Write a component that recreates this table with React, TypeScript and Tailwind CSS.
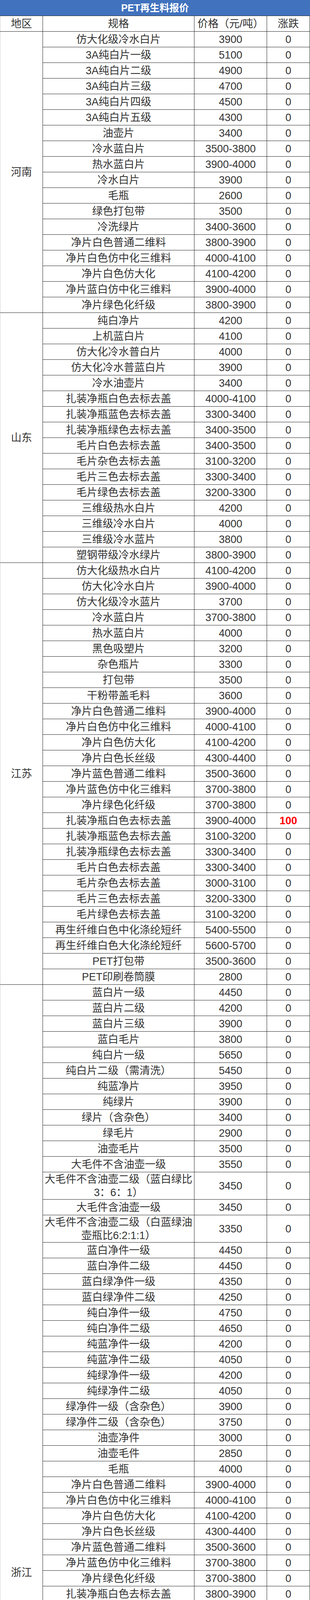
import React from "react";

type Group = { region: string; rows: string[] };

// each row: "spec|price|change" ; "\n" inside spec marks a line break (tall row)
const groups: Group[] = [
  {
    region: "河南",
    rows: [
      "仿大化级冷水白片|3900",
      "3A纯白片一级|5100",
      "3A纯白片二级|4900",
      "3A纯白片三级|4700",
      "3A纯白片四级|4500",
      "3A纯白片五级|4300",
      "油壶片|3400",
      "冷水蓝白片|3500-3800",
      "热水蓝白片|3900-4000",
      "冷水白片|3900",
      "毛瓶|2600",
      "绿色打包带|3500",
      "冷洗绿片|3400-3600",
      "净片白色普通二维料|3800-3900",
      "净片白色仿中化三维料|4000-4100",
      "净片白色仿大化|4100-4200",
      "净片蓝白仿中化三维料|3900-4000",
      "净片绿色化纤级|3800-3900",
    ],
  },
  {
    region: "山东",
    rows: [
      "纯白净片|4200",
      "上机蓝白片|4100",
      "仿大化冷水普白片|4000",
      "仿大化冷水普蓝白片|3900",
      "冷水油壶片|3400",
      "扎装净瓶白色去标去盖|4000-4100",
      "扎装净瓶蓝色去标去盖|3300-3400",
      "扎装净瓶绿色去标去盖|3400-3500",
      "毛片白色去标去盖|3400-3500",
      "毛片杂色去标去盖|3100-3200",
      "毛片三色去标去盖|3300-3400",
      "毛片绿色去标去盖|3200-3300",
      "三维级热水白片|4200",
      "三维级冷水白片|4000",
      "三维级冷水蓝片|3800",
      "塑钢带级冷水绿片|3800-3900",
    ],
  },
  {
    region: "江苏",
    rows: [
      "仿大化级热水白片|4100-4200",
      "仿大化冷水白片|3900-4000",
      "仿大化级冷水蓝片|3700",
      "冷水蓝白片|3700-3800",
      "热水蓝白片|4000",
      "黑色吸塑片|3200",
      "杂色瓶片|3300",
      "打包带|3500",
      "干粉带盖毛料|3600",
      "净片白色普通二维料|3900-4000",
      "净片白色仿中化三维料|4000-4100",
      "净片白色仿大化|4100-4200",
      "净片白色长丝级|4300-4400",
      "净片蓝色普通二维料|3500-3600",
      "净片蓝色仿中化三维料|3700-3800",
      "净片绿色化纤级|3700-3800",
      "扎装净瓶白色去标去盖|3900-4000|100",
      "扎装净瓶蓝色去标去盖|3100-3200",
      "扎装净瓶绿色去标去盖|3300-3400",
      "毛片白色去标去盖|3300-3400",
      "毛片杂色去标去盖|3000-3100",
      "毛片三色去标去盖|3200-3300",
      "毛片绿色去标去盖|3100-3200",
      "再生纤维白色中化涤纶短纤|5400-5500",
      "再生纤维白色大化涤纶短纤|5600-5700",
      "PET打包带|3500-3600",
      "PET印刷卷筒膜|2800",
    ],
  },
  {
    region: "浙江",
    rows: [
      "蓝白片一级|4450",
      "蓝白片二级|4200",
      "蓝白片三级|3900",
      "蓝白毛片|3800",
      "纯白片一级|5650",
      "纯白片二级（需清洗）|5450",
      "纯蓝净片|3950",
      "纯绿片|3900",
      "绿片（含杂色）|3400",
      "绿毛片|2900",
      "油壶毛片|3500",
      "大毛件不含油壶一级|3550",
      "大毛件不含油壶二级（蓝白绿比\n3：6：1）|3450",
      "大毛件含油壶一级|3450",
      "大毛件不含油壶二级（白蓝绿油\n壶瓶比6:2:1:1）|3350",
      "蓝白净件一级|4450",
      "蓝白净件二级|4450",
      "蓝白绿净件一级|4350",
      "蓝白绿净件二级|4250",
      "纯白净件一级|4750",
      "纯白净件二级|4650",
      "纯蓝净件一级|4200",
      "纯蓝净件二级|4050",
      "纯绿净件一级|4200",
      "纯绿净件二级|4050",
      "绿净件一级（含杂色）|3900",
      "绿净件二级（含杂色）|3750",
      "油壶净件|3000",
      "油壶毛件|2850",
      "毛瓶|4000",
      "净片白色普通二维料|3900-4000",
      "净片白色仿中化三维料|4000-4100",
      "净片白色仿大化|4100-4200",
      "净片白色长丝级|4300-4400",
      "净片蓝色普通二维料|3500-3600",
      "净片蓝色仿中化三维料|3700-3800",
      "净片绿色化纤级|3700-3800",
      "扎装净瓶白色去标去盖|3800-3900",
      "扎装净瓶蓝色去标去盖|3300-3400",
      "扎装净瓶绿色去标去盖|3300-3400",
      "毛片白色去标去盖|3300-3400",
      "毛片杂色去标去盖|3000-3100",
      "毛片三色去标去盖|3200-3300",
      "毛片绿色去标去盖|3100-3200",
      "绿净砖|3700",
      "热水蓝白片|4100-4200",
      "冷水蓝白片|3800",
      "蓝白毛片（带盖）|3400",
      "油瓶毛片|3400",
      "冷水绿片|3900",
      "普通白瓶（外表灰暗但水洗后能\n恢复光亮）|3600",
      "等外白瓶（含黏胶标签，外表灰\n暗但水洗后不能恢复光亮）|2800",
      "蓝瓶|2400",
      "散货优质绿瓶（单独打包，优质\n比例85%以上，加400元/吨）|2300",
      "普通绿瓶|2100",
      "小油瓶（油瓶比例不超过\n10%）|2500",
      "散货杂色瓶（单独打包，加300\n元/吨）|100",
      "散货杂塑瓶（单独打包，加300\n元/吨）|100",
      "散货瓶盖（单独装袋，加200元/\n吨）|2600",
      "冷水片3A白瓶片（分六级，按\n等级结算）|4400-4900",
      "冷水白蓝片（分六级，按等级结\n算）|4100-4500",
      "单独打包油砖|2500",
      "单独打包瓶胚粉碎料（白）|6600",
      "单独打包瓶胚粉碎料（灰）|6300",
      "塑钢带级冷水绿片|3900",
      "三维级热水蓝白片|4100-4200",
      "长丝级冷水蓝白片|3800-3900",
    ],
  },
  {
    region: "福建",
    rows: ["三维级热水蓝白片|3800", "冷水蓝白|3600"],
  },
];

function DataRow({ raw }: { raw: string }) {
  const [spec, price, change = "0"] = raw.split("|");
  const lines = spec.split("\n");
  const tall = lines.length > 1;
  const up = change !== "0";
  return (
    <div
      className={
        tall
          ? "flex h-[70px] border-b border-[#262626]"
          : "flex h-[40px] border-b border-[#262626]"
      }
    >
      <div className="flex w-[388px] shrink-0 flex-col items-center justify-center whitespace-nowrap border-r border-[#262626] leading-[34px]">
        {lines.map((l, i) => (
          <span key={i}>{l}</span>
        ))}
      </div>
      <div className="flex w-[186px] shrink-0 items-center justify-center border-r border-[#262626]">
        {price}
      </div>
      <div
        className={
          up
            ? "flex w-[110px] shrink-0 items-center justify-center border-r border-[#262626] font-bold text-[#ff0000]"
            : "flex w-[110px] shrink-0 items-center justify-center border-r border-[#262626]"
        }
      >
        {change}
      </div>
    </div>
  );
}

export default function App() {
  return (
    <div className="w-[794px] bg-white font-['Liberation_Sans','Noto_Sans_CJK_SC',sans-serif] text-[27px] leading-[34px] text-[#333333]">
      <div className="flex h-[41px] items-center justify-center border-b border-[#262626] bg-[#4172be] text-[25px] font-bold text-white">
        PET再生料报价
      </div>
      <div className="flex h-[40px] border-b border-[#262626]">
        <div className="flex w-[110px] shrink-0 items-center justify-center border-l border-r border-l-[#cfcfcf] border-r-[#262626]">
          地区
        </div>
        <div className="flex w-[388px] shrink-0 items-center justify-center border-r border-[#262626]">
          规格
        </div>
        <div className="flex w-[186px] shrink-0 items-center justify-center border-r border-[#262626]">
          价格（元/吨）
        </div>
        <div className="flex w-[110px] shrink-0 items-center justify-center border-r border-[#262626]">
          涨跌
        </div>
      </div>
      {groups.map((g) => (
        <div key={g.region} className="flex">
          <div className="flex w-[110px] shrink-0 items-center justify-center border-b border-l border-r border-b-[#262626] border-l-[#cfcfcf] border-r-[#262626]">
            {g.region}
          </div>
          <div className="flex flex-col">
            {g.rows.map((r, i) => (
              <DataRow key={i} raw={r} />
            ))}
          </div>
        </div>
      ))}
    </div>
  );
}
